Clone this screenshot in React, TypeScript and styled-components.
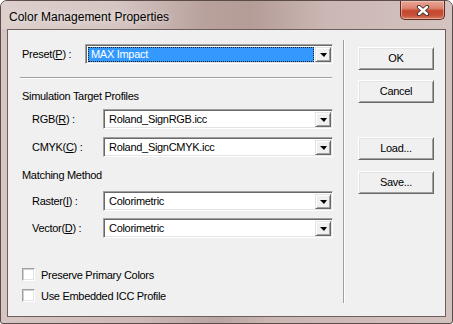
import React from 'react';
import styled, { createGlobalStyle } from 'styled-components';

const Global = createGlobalStyle`
  html, body { margin: 0; padding: 0; background: #ffffff; }
  body { width: 453px; height: 324px; overflow: hidden; }
`;

const Window = styled.div`
  width: 453px;
  height: 324px;
  box-sizing: border-box;
  border: 1px solid #5b4c49;
  border-radius: 7px 7px 3px 3px;
  padding: 0 6px 6px 6px;
  display: flex;
  flex-direction: column;
  background:
    linear-gradient(90deg, rgba(255,255,255,0.25) 0%, rgba(255,255,255,0.1) 30%, rgba(0,0,0,0.08) 48%, rgba(255,255,255,0.05) 60%, rgba(255,255,255,0.2) 100%),
    #c8b2ae;
  font-family: "Liberation Sans", Arial, sans-serif;
  overflow: hidden;
`;

const TitleBar = styled.div`
  height: 28px;
  display: flex;
  align-items: flex-start;
  justify-content: space-between;
  background: linear-gradient(90deg, #dccfcc 0%, #d6c6c3 25%, #b9a29d 45%, #b49c97 55%, #cbb7b3 72%, #d4c3c0 100%);
  margin: 0 -6px;
  padding: 0 7px 0 7px;
`;

const TitleText = styled.span`
  font-family: "Liberation Sans", Arial, sans-serif;
  font-size: 12px;
  color: #000000;
  margin-top: 9px;
  margin-left: 1px;
  line-height: 14px;
  text-shadow: 0 0 6px rgba(255,255,255,0.9);
`;

const CloseButton = styled.div`
  width: 45px;
  height: 19px;
  box-sizing: border-box;
  margin-right: 0px;
  border: 1px solid #5c2b22;
  border-top: none;
  border-radius: 0 0 5px 5px;
  background: linear-gradient(180deg, #e6a596 0%, #dc8571 40%, #c5452d 55%, #c8523a 80%, #d77a5f 100%);
  box-shadow: inset 0 0 0 1px rgba(255,220,210,0.5);
  display: flex;
  align-items: center;
  justify-content: center;
`;

const Client = styled.div`
  flex: 1;
  border: 1px solid #6f5f5c;
  background: #f0f0f0;
  display: flex;
  flex-direction: row;
  font-size: 11px;
  letter-spacing: -0.3px;
  color: #000000;
`;

const LeftPanel = styled.div`
  width: 335px;
  display: flex;
  flex-direction: column;
  padding-top: 14px;
`;

const Row = styled.div<{ $indent: number; $top?: number }>`
  display: flex;
  align-items: center;
  padding-left: ${p => p.$indent}px;
  margin-top: ${p => p.$top ?? 0}px;
  height: 20px;
`;

const Label = styled.span<{ $width: number }>`
  width: ${p => p.$width}px;
  flex: none;
  line-height: 13px;
`;

const Hotkey = styled.span`
  text-decoration: underline;
`;

const Combo = styled.div<{ $width: number }>`
  width: ${p => p.$width}px;
  height: 20px;
  box-sizing: border-box;
  border: 1px solid;
  border-color: #a0a0a0 #ffffff #ffffff #a0a0a0;
  box-shadow: inset 1px 1px 0 #696969, inset -1px -1px 0 #e3e3e3;
  background: #ffffff;
  display: flex;
  align-items: stretch;
  padding: 2px 1px 1px 2px;
`;

const ComboText = styled.div<{ $selected?: boolean }>`
  flex: 1;
  display: flex;
  align-items: center;
  padding-left: 2px;
  margin-right: 1px;
  box-sizing: border-box;
  color: ${p => (p.$selected ? '#ffffff' : '#000000')};
  background: ${p => (p.$selected ? '#3399ff' : 'transparent')};
  border: 1px ${p => (p.$selected ? 'dotted #1a1a1a' : 'solid transparent')};
  line-height: 13px;
  white-space: nowrap;
`;

const ArrowButton = styled.div`
  width: 16px;
  flex: none;
  box-sizing: border-box;
  background: #f0f0f0;
  border: 1px solid;
  border-color: #e3e3e3 #696969 #696969 #e3e3e3;
  box-shadow: inset 1px 1px 0 #ffffff, inset -1px -1px 0 #a0a0a0;
  display: flex;
  align-items: center;
  justify-content: center;
`;

const Triangle = styled.div`
  width: 0;
  height: 0;
  border-left: 4px solid transparent;
  border-right: 3px solid transparent;
  border-top: 4px solid #000000;
  margin-top: 1px;
`;

const HLine = styled.div`
  margin: 13px 0 0 12px;
  width: 312px;
  height: 1px;
  background: #a0a0a0;
  border-bottom: 1px solid #ffffff;
`;

const SectionLabel = styled.div<{ $top: number }>`
  margin-top: ${p => p.$top}px;
  padding-left: 14px;
  line-height: 13px;
`;

const CheckRow = styled.div<{ $top: number }>`
  display: flex;
  align-items: center;
  margin-top: ${p => p.$top}px;
  padding-left: 14px;
  height: 13px;
`;

const CheckBox = styled.div`
  width: 13px;
  height: 13px;
  box-sizing: border-box;
  border: 1px solid;
  border-color: #a0a0a0 #ffffff #ffffff #a0a0a0;
  box-shadow: inset 1px 1px 0 #d0d0d0, inset -1px -1px 0 #e3e3e3;
  background: #ffffff;
  margin-right: 6px;
`;

const VLine = styled.div`
  width: 1px;
  margin: 10px 0 13px 0;
  background: #a0a0a0;
  border-right: 1px solid #ffffff;
`;

const ButtonColumn = styled.div`
  display: flex;
  flex-direction: column;
  padding: 17px 0 0 13px;
`;

const Button = styled.div<{ $top: number }>`
  width: 76px;
  height: 23px;
  margin-top: ${p => p.$top}px;
  box-sizing: border-box;
  background: #f0f0f0;
  border: 1px solid;
  border-color: #ffffff #696969 #696969 #ffffff;
  box-shadow: inset 1px 1px 0 #e3e3e3, inset -1px -1px 0 #a0a0a0;
  display: flex;
  align-items: center;
  justify-content: center;
  line-height: 13px;
`;

const Dropdown: React.FC<{ width: number; value: string; selected?: boolean }> = ({ width, value, selected }) => (
  <Combo $width={width}>
    <ComboText $selected={selected}>{value}</ComboText>
    <ArrowButton>
      <Triangle />
    </ArrowButton>
  </Combo>
);

export default function App() {
  return (
    <>
      <Global />
      <Window>
        <TitleBar>
          <TitleText>Color Management Properties</TitleText>
          <CloseButton>
            <svg width="14" height="11" viewBox="0 0 14 11">
              <path d="M3 2 L11 9 M11 2 L3 9" stroke="#3b2a28" strokeWidth="4.2" strokeLinecap="round" />
              <path d="M3 2 L11 9 M11 2 L3 9" stroke="#ffffff" strokeWidth="2.4" strokeLinecap="round" />
            </svg>
          </CloseButton>
        </TitleBar>
        <Client>
          <LeftPanel>
            <Row $indent={14}>
              <Label $width={63}>Preset(<Hotkey>P</Hotkey>) :</Label>
              <Dropdown width={248} value="MAX Impact" selected />
            </Row>
            <HLine />
            <SectionLabel $top={11}>Simulation Target Profiles</SectionLabel>
            <Row $indent={24} $top={6}>
              <Label $width={71}>RGB(<Hotkey>R</Hotkey>) :</Label>
              <Dropdown width={230} value="Roland_SignRGB.icc" />
            </Row>
            <Row $indent={24} $top={8}>
              <Label $width={71}>CMYK(<Hotkey>C</Hotkey>) :</Label>
              <Dropdown width={230} value="Roland_SignCMYK.icc" />
            </Row>
            <SectionLabel $top={12}>Matching Method</SectionLabel>
            <Row $indent={24} $top={9}>
              <Label $width={71}>Raster(<Hotkey>I</Hotkey>) :</Label>
              <Dropdown width={230} value="Colorimetric" />
            </Row>
            <Row $indent={24} $top={7}>
              <Label $width={71}>Vector(<Hotkey>D</Hotkey>) :</Label>
              <Dropdown width={230} value="Colorimetric" />
            </Row>
            <CheckRow $top={30}>
              <CheckBox />
              <span>Preserve Primary Colors</span>
            </CheckRow>
            <CheckRow $top={8}>
              <CheckBox />
              <span>Use Embedded ICC Profile</span>
            </CheckRow>
          </LeftPanel>
          <VLine />
          <ButtonColumn>
            <Button $top={0}>OK</Button>
            <Button $top={10}>Cancel</Button>
            <Button $top={34}>Load...</Button>
            <Button $top={11}>Save...</Button>
          </ButtonColumn>
        </Client>
      </Window>
    </>
  );
}
